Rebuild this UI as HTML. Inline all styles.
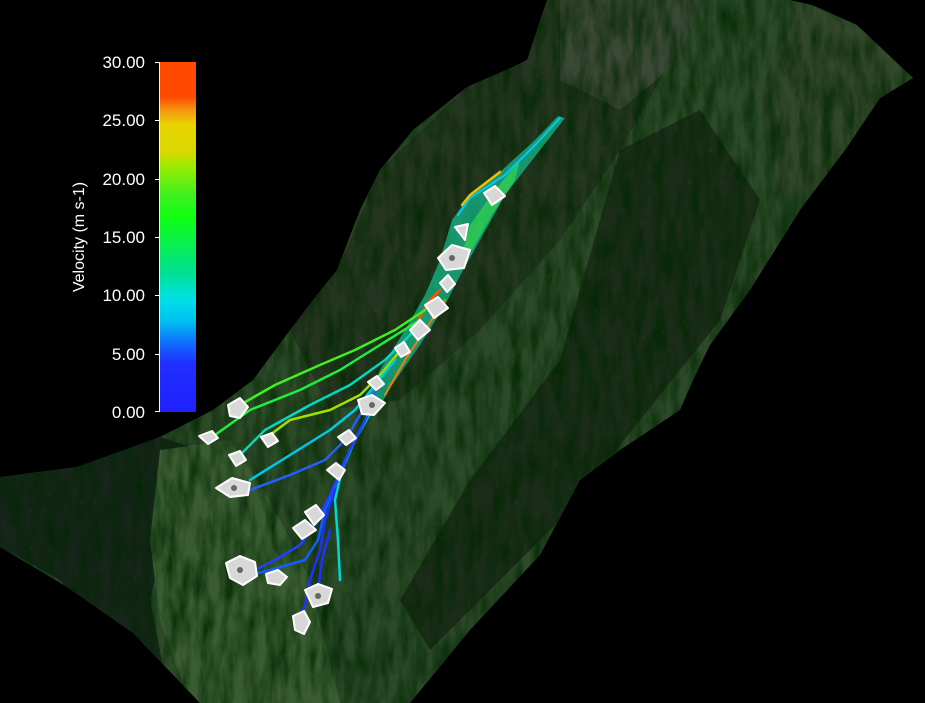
<!DOCTYPE html>
<html><head><meta charset="utf-8"><style>
html,body{margin:0;padding:0;background:#000;width:925px;height:703px;overflow:hidden}
svg{display:block}
text{font-family:"Liberation Sans",sans-serif;fill:#fff}
</style></head><body>
<svg width="925" height="703" viewBox="0 0 925 703" xmlns="http://www.w3.org/2000/svg">
<defs>
<linearGradient id="cb" x1="0" y1="0" x2="0" y2="1">
<stop offset="0" stop-color="#ff4a00"/><stop offset="0.1" stop-color="#ff4a00"/>
<stop offset="0.14" stop-color="#f59a10"/><stop offset="0.18" stop-color="#e8d400"/>
<stop offset="0.26" stop-color="#d8d800"/><stop offset="0.3" stop-color="#98ec00"/>
<stop offset="0.38" stop-color="#40f020"/><stop offset="0.44" stop-color="#10ff10"/>
<stop offset="0.6" stop-color="#00e090"/><stop offset="0.68" stop-color="#00e0e8"/>
<stop offset="0.74" stop-color="#00c0f0"/><stop offset="0.8" stop-color="#1070ff"/>
<stop offset="0.86" stop-color="#2030ff"/><stop offset="1" stop-color="#2020ff"/>
</linearGradient>
<clipPath id="terr"><path d="M547 0 L790 0 L812 5 L857 25 L913 78 L880 98 L845 150 L800 210 L750 290 L710 345 L693 380 L680 410 L620 450 L580 480 L540 555 L470 630 L410 703 L200 703 L133 633 L67 587 L0 547 L0 477 L77 467 L160 437 L213 410 L253 380 L290 330 L313 300 L337 270 L360 210 L380 170 L413 130 L467 87 L513 67 L527 60 Z"/></clipPath>
<filter id="tx" x="0" y="0" width="100%" height="100%">
<feTurbulence type="fractalNoise" baseFrequency="0.09 0.025" numOctaves="3" seed="4"/>
<feColorMatrix type="matrix" values="0 0 0 0 0  0 0 0 0 0.02  0 0 0 0 0  -1.8 0 0 0 1.2"/>
</filter>
<filter id="tx2" x="0" y="0" width="100%" height="100%">
<feTurbulence type="fractalNoise" baseFrequency="0.15" numOctaves="2" seed="9"/>
<feColorMatrix type="matrix" values="0 0 0 0 0.3  0 0 0 0 0.5  0 0 0 0 0.3  1.4 0 0 0 -0.9"/>
</filter>
</defs>
<rect width="925" height="703" fill="#000"/>
<g clip-path="url(#terr)">
<rect width="925" height="703" fill="#2c4a28"/>
<path d="M547 0 L700 0 L660 80 L620 150 L560 240 L480 330 L400 400 L330 410 L290 330 L337 270 L380 170 L467 87 Z" fill="#24361f"/>
<path d="M620 150 L700 110 L760 200 L720 320 L640 420 L560 520 L480 600 L430 650 L400 600 L470 480 L560 360 Z" fill="#1b2d18"/>
<path d="M0 477 L77 467 L160 437 L200 450 L170 520 L150 600 L170 703 L120 650 L60 580 L0 547 Z" fill="#16261a"/>
<path d="M160 450 L230 440 L270 500 L310 580 L340 703 L190 703 L160 620 L150 540 Z" fill="#3a5c32"/>
<path d="M560 0 L700 0 L680 60 L620 110 L560 80 Z" fill="#3a4834"/>
<path d="M800 0 L860 30 L913 78 L840 180 L780 200 L760 100 Z" fill="#33482b"/>
<rect width="925" height="703" filter="url(#tx)" opacity="0.85"/>
<rect width="925" height="703" filter="url(#tx2)" opacity="0.18"/>
</g>
<!-- debris band -->
<path d="M565 118 L540 150 L505 195 L480 240 L462 272 L445 305 L420 345 L392 385 L378 410 L362 410 L380 370 L405 330 L425 295 L440 260 L452 220 L470 195 L500 172 L535 140 L558 116 Z" fill="#18d8a8" opacity="0.6"/>
<path d="M520 160 L495 190 L470 225 L462 255 L472 250 L492 215 L515 180 Z" fill="#40f040" opacity="0.5"/>
<!-- trajectories -->
<g fill="none" stroke-width="2.5" stroke-linecap="round" stroke-linejoin="round">
<path d="M560 118 L535 145 L505 175 L470 198 L458 215" stroke="#00c8f0" stroke-width="2"/>
<path d="M500 172 L470 195 L462 205" stroke="#f0c000"/>
<path d="M440 290 L430 300 L418 320" stroke="#ff5000"/>
<path d="M445 300 L425 330 L405 360 L385 395" stroke="#f08000" stroke-width="2"/>
<path d="M425 310 L395 330 L355 350 L320 365 L275 385 L240 405" stroke="#40f020"/>
<path d="M420 320 L380 345 L340 370 L300 390 L250 410 L215 435" stroke="#20ee40"/>
<path d="M415 330 L385 360 L350 385 L310 405 L265 430 L240 455" stroke="#00d8c0"/>
<path d="M405 345 L380 375 L360 395 L330 410 L290 420 L270 435" stroke="#a0e000"/>
<path d="M395 360 L375 385 L355 410 L330 430 L290 455 L250 480" stroke="#00c8e8"/>
<path d="M380 385 L360 415 L345 440 L325 460 L290 475 L250 490" stroke="#2060ff"/>
<path d="M372 410 L355 440 L342 470 L335 500 L338 540 L340 580" stroke="#00d8d0"/>
<path d="M368 415 L350 450 L338 480 L325 510 L318 540 L305 560 L270 570 L250 575" stroke="#1060ff"/>
<path d="M365 420 L345 460 L330 495 L315 525 L300 545 L275 560 L255 570" stroke="#2040ff"/>
<path d="M335 490 L325 520 L320 550 L310 580 L305 605 L300 615" stroke="#2030ff"/>
<path d="M330 530 L322 560 L318 590" stroke="#2030ff"/>
</g>
<!-- rocks -->
<g fill="#d8d8d8" stroke="#fff" stroke-width="2" stroke-linejoin="round">
<polygon points="228,405 240,398 248,407 240,418 230,416"/>
<polygon points="199,436 212,431 218,438 208,444"/>
<polygon points="261,437 272,433 278,441 268,447"/>
<polygon points="229,455 240,451 246,460 236,466"/>
<polygon points="216,488 232,478 250,483 248,495 230,497"/>
<polygon points="226,563 240,556 255,562 257,576 243,585 230,578"/>
<polygon points="266,574 278,570 287,577 280,585 268,583"/>
<polygon points="293,616 304,611 310,622 304,634 295,630"/>
<polygon points="305,590 318,584 332,589 328,603 313,607"/>
<polygon points="293,528 305,520 316,530 302,539"/>
<polygon points="305,512 316,505 324,515 314,525"/>
<polygon points="327,470 336,463 345,470 339,480"/>
<polygon points="338,437 349,430 356,438 346,445"/>
<polygon points="358,400 372,395 385,403 374,415 362,414"/>
<polygon points="368,382 377,376 384,384 376,390"/>
<polygon points="395,348 404,342 410,352 401,357"/>
<polygon points="410,330 420,320 430,330 418,340"/>
<polygon points="425,305 438,297 448,308 434,318"/>
<polygon points="440,283 448,275 455,284 447,292"/>
<polygon points="438,258 452,245 470,250 464,268 446,270"/>
<polygon points="455,227 468,224 465,240"/>
<polygon points="484,193 495,186 505,196 492,205"/>
</g>
<g fill="#666">
<circle cx="240" cy="570" r="3"/><circle cx="318" cy="596" r="3"/><circle cx="452" cy="258" r="3"/><circle cx="372" cy="405" r="3"/><circle cx="234" cy="488" r="3"/>
</g>
<!-- colorbar -->
<rect x="160" y="62" width="36" height="350" fill="url(#cb)"/>
<g stroke="#fff" stroke-width="1">
<line x1="159.5" y1="62" x2="159.5" y2="412"/>
<line x1="155" y1="62.5" x2="160" y2="62.5"/><line x1="155" y1="120.5" x2="160" y2="120.5"/>
<line x1="155" y1="179.5" x2="160" y2="179.5"/><line x1="155" y1="237.5" x2="160" y2="237.5"/>
<line x1="155" y1="295.5" x2="160" y2="295.5"/><line x1="155" y1="354.5" x2="160" y2="354.5"/>
<line x1="155" y1="411.5" x2="160" y2="411.5"/>
</g>
<g font-size="17" text-anchor="end">
<text x="145" y="68">30.00</text><text x="145" y="126">25.00</text>
<text x="145" y="185">20.00</text><text x="145" y="243">15.00</text>
<text x="145" y="301">10.00</text><text x="145" y="360">5.00</text>
<text x="145" y="418">0.00</text>
</g>
<text x="0" y="0" font-size="16" text-anchor="middle" transform="translate(84 237) rotate(-90)">Velocity (m s-1)</text>
</svg>
</body></html>
